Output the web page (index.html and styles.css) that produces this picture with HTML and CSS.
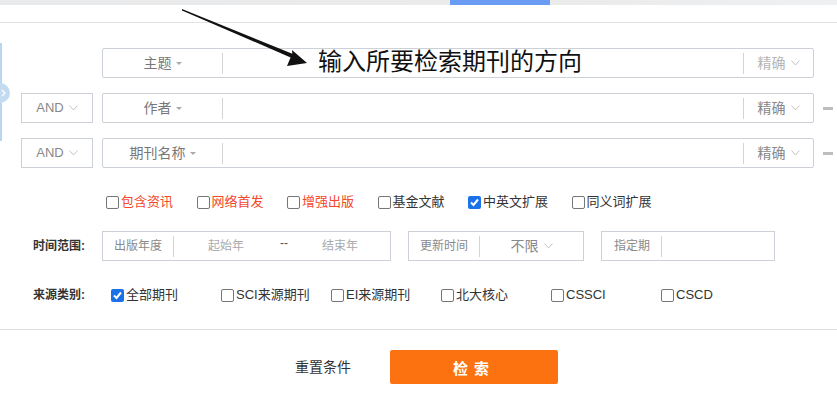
FILE: index.html
```html
<!DOCTYPE html>
<html lang="zh-CN">
<head>
    <meta charset="UTF-8">
    <title>期刊检索</title>
    <link rel="stylesheet" href="styles.css">
</head>
<body>
    <div class="topbar"><div class="topbar-tab"></div></div>
    <div class="tabline"></div>

    <div class="panel">
        <!-- collapse handle on the left edge -->
        <div class="side-handle"></div>
        <div class="side-knob">
            <svg width="6" height="8" viewBox="0 0 6 8"><polyline points="1,1 4,4 1,7" fill="none" stroke="#fff" stroke-width="1.2"/></svg>
        </div>

        <!-- annotation arrow -->
        <svg class="hint-arrow" width="320" height="80" viewBox="0 0 320 80">
            <polygon points="182,9 292.3,53.7 292,50 307,63 287,66 290.6,57.4 182,10.4" fill="#111"/>
        </svg>

        <div class="rows">
            <div class="row">
                <div class="logic logic-empty"></div>
                <div class="field">
                    <div class="field-key">主题<i class="caret"></i></div>
                    <div class="field-input"><span class="hint">输入所要检索期刊的方向</span></div>
                    <div class="field-match light">精确<svg class="chev" width="9" height="6" viewBox="0 0 9 6"><polyline points="0.5,0.5 4.5,5 8.5,0.5" fill="none" stroke="#c4c4c4"/></svg></div>
                </div>
                <div class="minus minus-empty"></div>
            </div>
            <div class="row">
                <div class="logic">AND<svg class="chev" width="9" height="6" viewBox="0 0 9 6"><polyline points="0.5,0.5 4.5,5 8.5,0.5" fill="none" stroke="#c4c4c4"/></svg></div>
                <div class="field">
                    <div class="field-key">作者<i class="caret"></i></div>
                    <div class="field-input"></div>
                    <div class="field-match">精确<svg class="chev" width="9" height="6" viewBox="0 0 9 6"><polyline points="0.5,0.5 4.5,5 8.5,0.5" fill="none" stroke="#c4c4c4"/></svg></div>
                </div>
                <div class="minus"></div>
            </div>
            <div class="row">
                <div class="logic">AND<svg class="chev" width="9" height="6" viewBox="0 0 9 6"><polyline points="0.5,0.5 4.5,5 8.5,0.5" fill="none" stroke="#c4c4c4"/></svg></div>
                <div class="field">
                    <div class="field-key">期刊名称<i class="caret"></i></div>
                    <div class="field-input"></div>
                    <div class="field-match">精确<svg class="chev" width="9" height="6" viewBox="0 0 9 6"><polyline points="0.5,0.5 4.5,5 8.5,0.5" fill="none" stroke="#c4c4c4"/></svg></div>
                </div>
                <div class="minus"></div>
            </div>
        </div>

        <div class="options">
            <label class="opt red"><span class="cb"></span>包含资讯</label>
            <label class="opt red"><span class="cb"></span>网络首发</label>
            <label class="opt red"><span class="cb"></span>增强出版</label>
            <label class="opt"><span class="cb"></span>基金文献</label>
            <label class="opt"><span class="cb checked"><svg width="11" height="11" viewBox="0 0 11 11"><polyline points="2,5.5 4.5,8 9,2.5" fill="none" stroke="#fff" stroke-width="2"/></svg></span>中英文扩展</label>
            <label class="opt"><span class="cb"></span>同义词扩展</label>
        </div>

        <div class="range-row">
            <div class="row-label">时间范围:</div>
            <div class="range-box range-year">
                <span class="range-name">出版年度</span>
                <span class="range-sep"></span>
                <span class="year-start">起始年</span>
                <span class="year-dash">--</span>
                <span class="year-end">结束年</span>
            </div>
            <div class="range-box range-update">
                <span class="range-name">更新时间</span>
                <span class="range-sep"></span>
                <span class="update-value">不限<svg class="chev" width="9" height="6" viewBox="0 0 9 6"><polyline points="0.5,0.5 4.5,5 8.5,0.5" fill="none" stroke="#c4c4c4"/></svg></span>
            </div>
            <div class="range-box range-issue">
                <span class="range-name">指定期</span>
                <span class="range-sep"></span>
            </div>
        </div>

        <div class="source-row">
            <div class="row-label source-label">来源类别:</div>
            <label class="src"><span class="cb checked"><svg width="11" height="11" viewBox="0 0 11 11"><polyline points="2,5.5 4.5,8 9,2.5" fill="none" stroke="#fff" stroke-width="2"/></svg></span>全部期刊</label>
            <label class="src"><span class="cb"></span>SCI来源期刊</label>
            <label class="src"><span class="cb"></span>EI来源期刊</label>
            <label class="src"><span class="cb"></span>北大核心</label>
            <label class="src"><span class="cb"></span>CSSCI</label>
            <label class="src"><span class="cb"></span>CSCD</label>
        </div>
    </div>

    <div class="actions">
        <span class="reset">重置条件</span>
        <button class="search-btn">检 索</button>
    </div>
</body>
</html>
```

FILE: styles.css
```css
body {
    margin: 0;
    background: #fff;
    font-family: "Liberation Sans", "Noto Sans CJK SC", sans-serif;
    font-size: 13px;
    line-height: 20px;
    color: #333;
}
.topbar {
    height: 5px;
    background: linear-gradient(90deg, #e9eaeb 0%, #ebebec 70%, #eef0f1 100%);
}
.topbar-tab {
    margin-left: 450px;
    width: 100px;
    height: 5px;
    background: #6b9cf4;
}
.tabline {
    margin-top: 17px;
    border-top: 1px solid #e3e3e3;
}
.panel {
    position: relative;
    padding-top: 25px;
}
.side-handle {
    position: absolute;
    left: 0;
    top: 20px;
    width: 2px;
    height: 98px;
    background: #b9d7f1;
}
.side-knob {
    position: absolute;
    left: -10px;
    top: 60px;
    width: 20px;
    height: 20px;
    border-radius: 50%;
    background: #c3dbf0;
    display: flex;
    align-items: center;
    justify-content: flex-end;
    padding-right: 3px;
    box-sizing: border-box;
}
.hint-arrow {
    position: absolute;
    left: 0;
    top: -23px;
    pointer-events: none;
}
.rows {
    display: flex;
    flex-direction: column;
    gap: 15px;
}
.row {
    display: flex;
    align-items: center;
    padding-left: 21px;
    gap: 9px;
}
.logic {
    width: 72px;
    height: 30px;
    box-sizing: border-box;
    border: 1px solid #ccd0d7;
    display: flex;
    align-items: center;
    justify-content: center;
    color: #888;
    font-size: 13px;
}
.logic-empty {
    border-color: transparent;
}
.chev {
    margin-left: 5px;
}
.field {
    width: 712px;
    height: 30px;
    box-sizing: border-box;
    border: 1px solid #ccd0d7;
    border-radius: 2px;
    display: flex;
    align-items: center;
}
.field-key {
    width: 119px;
    height: 21px;
    border-right: 1px solid #d3d3d3;
    display: flex;
    align-items: center;
    justify-content: center;
    color: #777;
    font-size: 14px;
}
.caret {
    margin-left: 4px;
    border-left: 3px solid transparent;
    border-right: 3px solid transparent;
    border-top: 3px solid #aaa;
}
.field-input {
    flex: 1;
    height: 21px;
    display: flex;
    align-items: center;
}
.hint {
    margin-left: 95px;
    margin-top: -3px;
    font-size: 24px;
    color: #111;
    white-space: nowrap;
}
.field-match {
    width: 69px;
    height: 21px;
    border-left: 1px solid #d3d3d3;
    display: flex;
    align-items: center;
    justify-content: center;
    color: #888;
    font-size: 14px;
}
.field-match.light {
    color: #b5b5b5;
}
.minus {
    width: 10px;
    height: 3px;
    background: #bdbdbd;
}
.minus-empty {
    background: transparent;
}
.options {
    display: flex;
    align-items: center;
    gap: 23.5px;
    margin-top: 24px;
    padding-left: 106px;
    height: 20px;
}
.opt, .src {
    display: flex;
    align-items: center;
    gap: 2px;
    color: #333;
    font-size: 13px;
    white-space: nowrap;
}
.opt.red {
    color: #f3482a;
}
.cb {
    width: 13px;
    height: 13px;
    box-sizing: border-box;
    border: 1px solid #767676;
    border-radius: 2px;
    background: #fff;
    display: flex;
    align-items: center;
    justify-content: center;
}
.cb.checked {
    border: none;
    background: #1b72e8;
}
.range-row {
    display: flex;
    align-items: center;
    margin-top: 19px;
    padding-left: 33px;
}
.row-label {
    width: 69px;
    font-size: 12px;
    font-weight: bold;
    color: #333;
}
.range-box {
    height: 30px;
    box-sizing: border-box;
    border: 1px solid #ccd0d7;
    display: flex;
    align-items: center;
    font-size: 12px;
    color: #999;
}
.range-year {
    width: 289px;
}
.range-update {
    width: 176px;
    margin-left: 17px;
}
.range-issue {
    width: 174px;
    margin-left: 17px;
}
.range-name {
    padding-left: 11px;
    color: #8a8a8a;
}
.range-issue .range-name {
    padding-left: 12px;
}
.range-sep {
    width: 1px;
    height: 21px;
    margin-left: 11px;
    background: #d3d3d3;
}
.year-start {
    width: 104px;
    text-align: center;
    color: #aaa;
}
.year-dash {
    width: 12px;
    text-align: center;
    color: #555;
    margin-top: -6px;
}
.year-end {
    flex: 1;
    text-align: center;
    color: #aaa;
}
.update-value {
    flex: 1;
    display: flex;
    align-items: center;
    justify-content: center;
    font-size: 14px;
    color: #888;
}
.source-row {
    display: flex;
    align-items: center;
    margin-top: 24px;
    padding-left: 33px;
    height: 20px;
}
.source-label {
    width: 78px;
}
.src {
    width: 110px;
}
.actions {
    margin-top: 24px;
    border-top: 1px solid #dcdcdc;
    padding: 20px 0 0 16px;
    display: flex;
    align-items: center;
    justify-content: center;
    gap: 39px;
}
.reset {
    font-size: 14px;
    color: #333;
}
.search-btn {
    width: 168px;
    height: 34px;
    border: none;
    border-radius: 2px;
    background: #fc7211;
    color: #fff;
    font-family: "Liberation Sans", "Noto Sans CJK SC", sans-serif;
    font-size: 15px;
    font-weight: bold;
    letter-spacing: 1px;
    padding-left: 1px;
    cursor: pointer;
}
```
